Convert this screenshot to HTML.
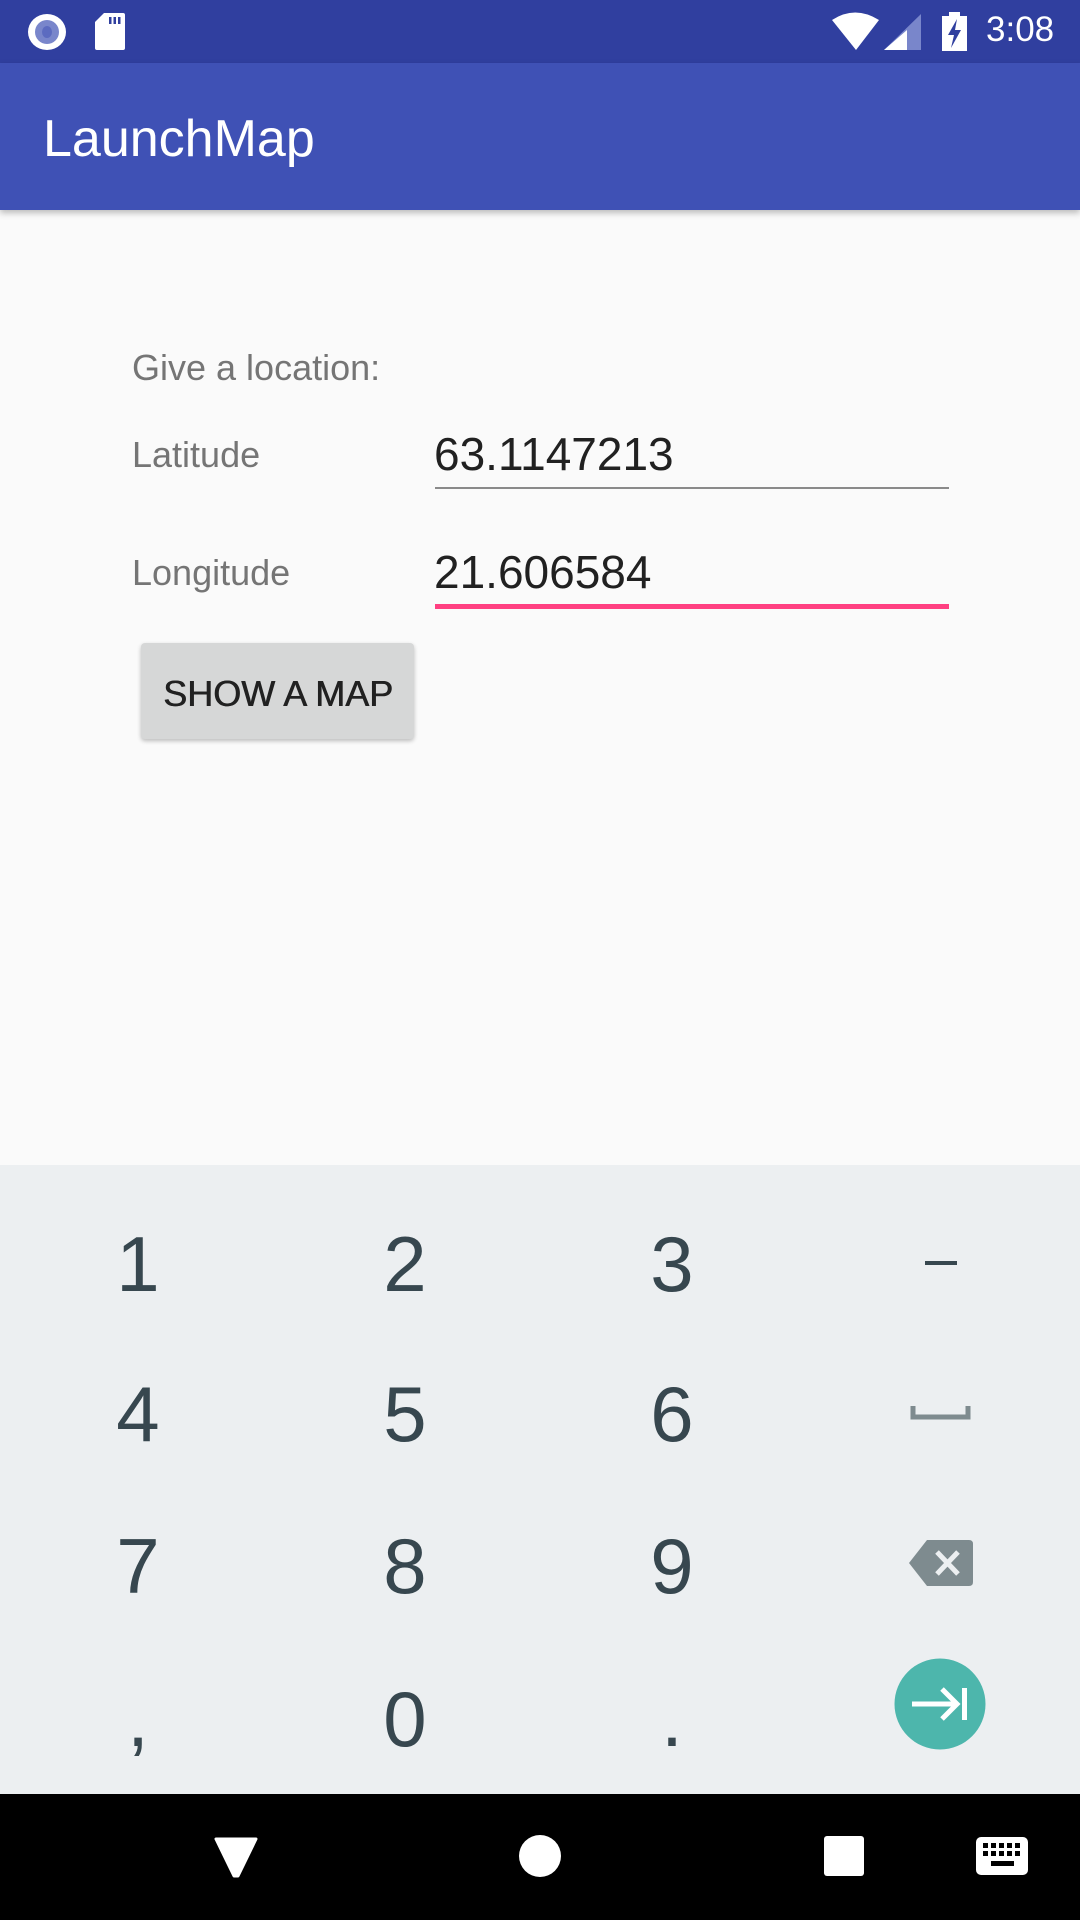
<!DOCTYPE html>
<html><head><meta charset="utf-8">
<style>
*{margin:0;padding:0;box-sizing:border-box}
body{width:1080px;height:1920px;position:relative;background:#fafafa;font-family:"Liberation Sans",sans-serif;overflow:hidden}
.abs{position:absolute}
.status{left:0;top:0;width:1080px;height:63px;background:#303f9f}
.appbar{left:0;top:63px;width:1080px;height:147px;background:#3f51b5;box-shadow:0 3px 6px rgba(0,0,0,0.25)}
.t{position:absolute;white-space:nowrap;line-height:1}
.kb{left:0;top:1165px;width:1080px;height:629px;background:#eceff1}
.nav{left:0;top:1794px;width:1080px;height:126px;background:#000}
.d{position:absolute;font-size:78px;color:#37474f;width:120px;text-align:center;line-height:1}
</style></head><body>
<div class="abs status"></div>
<svg class="abs" style="left:0;top:0" width="1080" height="63">
  <ellipse cx="47" cy="32" rx="19" ry="18" fill="#fff"/>
  <ellipse cx="47" cy="32" rx="12" ry="12" fill="#7986cb"/>
  <ellipse cx="47" cy="32" rx="5" ry="6" fill="#5c6bc0"/>
  <path d="M104 13 H123 Q125 13 125 15 V48 Q125 50 123 50 H97 Q95 50 95 48 V22 Z" fill="#fff"/>
  <rect x="109" y="17" width="2.5" height="7" fill="#303f9f"/><rect x="113.5" y="17" width="2.5" height="7" fill="#303f9f"/><rect x="118" y="17" width="2.5" height="7" fill="#303f9f"/>
  <path d="M832 20 Q855 5 879 20 L856 50 Z" fill="#fff"/>
  <path d="M921 14 V50 H884 Z" fill="#7986cb"/>
  <path d="M907 30 V50 H884 Z" fill="#fff"/>
  <rect x="942" y="16" width="25" height="35" fill="#fff"/><rect x="949" y="12" width="11" height="5" fill="#fff"/>
  <path d="M957 19 L948 35 H954 L951 48 L961 30 H955 Z" fill="#303f9f"/>
</svg>
<div class="t" style="left:986px;top:12px;font-size:35px;color:#fff">3:08</div>
<div class="abs appbar"></div>
<div class="t" style="left:43px;top:113px;font-size:52px;color:#fff">LaunchMap</div>

<div class="t" style="left:132px;top:350px;font-size:36px;color:#757575">Give a location:</div>
<div class="t" style="left:132px;top:437px;font-size:36px;color:#757575">Latitude</div>
<div class="t" style="left:132px;top:555px;font-size:36px;color:#757575">Longitude</div>
<div class="t" style="left:434px;top:431px;font-size:46px;color:#212121">63.1147213</div>
<div class="abs" style="left:435px;top:487px;width:514px;height:2px;background:#8a8a8a"></div>
<div class="t" style="left:434px;top:549px;font-size:46px;color:#212121">21.606584</div>
<div class="abs" style="left:435px;top:604px;width:514px;height:5px;background:#ff4081"></div>

<div class="abs" style="left:141px;top:643px;width:273px;height:96px;background:#d6d7d7;border-radius:4px;box-shadow:0 2px 4px rgba(0,0,0,0.25)"></div>
<div class="t" style="left:163px;top:676px;font-size:36px;color:#212121;text-shadow:0.6px 0 0 #212121">SHOW A MAP</div>

<div class="abs kb"></div>
<div class="d" style="left:78px;top:1225px">1</div>
<div class="d" style="left:345px;top:1225px">2</div>
<div class="d" style="left:612px;top:1225px">3</div>
<div class="abs" style="left:925px;top:1261px;width:32px;height:4px;background:#37474f"></div>
<div class="d" style="left:78px;top:1375px">4</div>
<div class="d" style="left:345px;top:1375px">5</div>
<div class="d" style="left:612px;top:1375px">6</div>
<svg class="abs" style="left:905px;top:1400px" width="70" height="25"><path d="M8 6 V17 H63 V6" fill="none" stroke="#7e8b8f" stroke-width="5"/></svg>
<div class="d" style="left:78px;top:1527px">7</div>
<div class="d" style="left:345px;top:1527px">8</div>
<div class="d" style="left:612px;top:1527px">9</div>
<svg class="abs" style="left:905px;top:1538px" width="70" height="52"><path d="M22 2 H64 Q68 2 68 6 V44 Q68 48 64 48 H22 L4 25 Z" fill="#7e8b8f"/><path d="M32 14 L53 36 M53 14 L32 36" stroke="#eceff1" stroke-width="5"/></svg>
<div class="d" style="left:78px;top:1680px">,</div>
<div class="d" style="left:345px;top:1680px">0</div>
<div class="d" style="left:612px;top:1680px">.</div>
<svg class="abs" style="left:894px;top:1658px" width="92" height="92"><circle cx="46" cy="46" r="45.5" fill="#4db6ac"/><path d="M18 46 H64 M48 31 L63 46 L48 61" fill="none" stroke="#fff" stroke-width="5"/><rect x="68" y="30" width="5" height="32" fill="#fff"/></svg>

<div class="abs nav"></div>
<svg class="abs" style="left:0;top:1794px" width="1080" height="126">
  <path d="M216 45 H256 L238 82 H234 Z" fill="#fff" stroke="#fff" stroke-width="3" stroke-linejoin="round"/>
  <circle cx="540" cy="62" r="21" fill="#fff"/>
  <rect x="824" y="42" width="40" height="40" rx="3" fill="#fff"/>
  <rect x="976" y="43" width="52" height="38" rx="5" fill="#fff"/>
  <g fill="#000">
   <rect x="983" y="49" width="5" height="5"/><rect x="991" y="49" width="5" height="5"/><rect x="999" y="49" width="5" height="5"/><rect x="1007" y="49" width="5" height="5"/><rect x="1015" y="49" width="5" height="5"/>
   <rect x="983" y="57" width="5" height="5"/><rect x="991" y="57" width="5" height="5"/><rect x="999" y="57" width="5" height="5"/><rect x="1007" y="57" width="5" height="5"/><rect x="1015" y="57" width="5" height="5"/>
   <rect x="991" y="67" width="23" height="5"/>
  </g>
</svg>
</body></html>
